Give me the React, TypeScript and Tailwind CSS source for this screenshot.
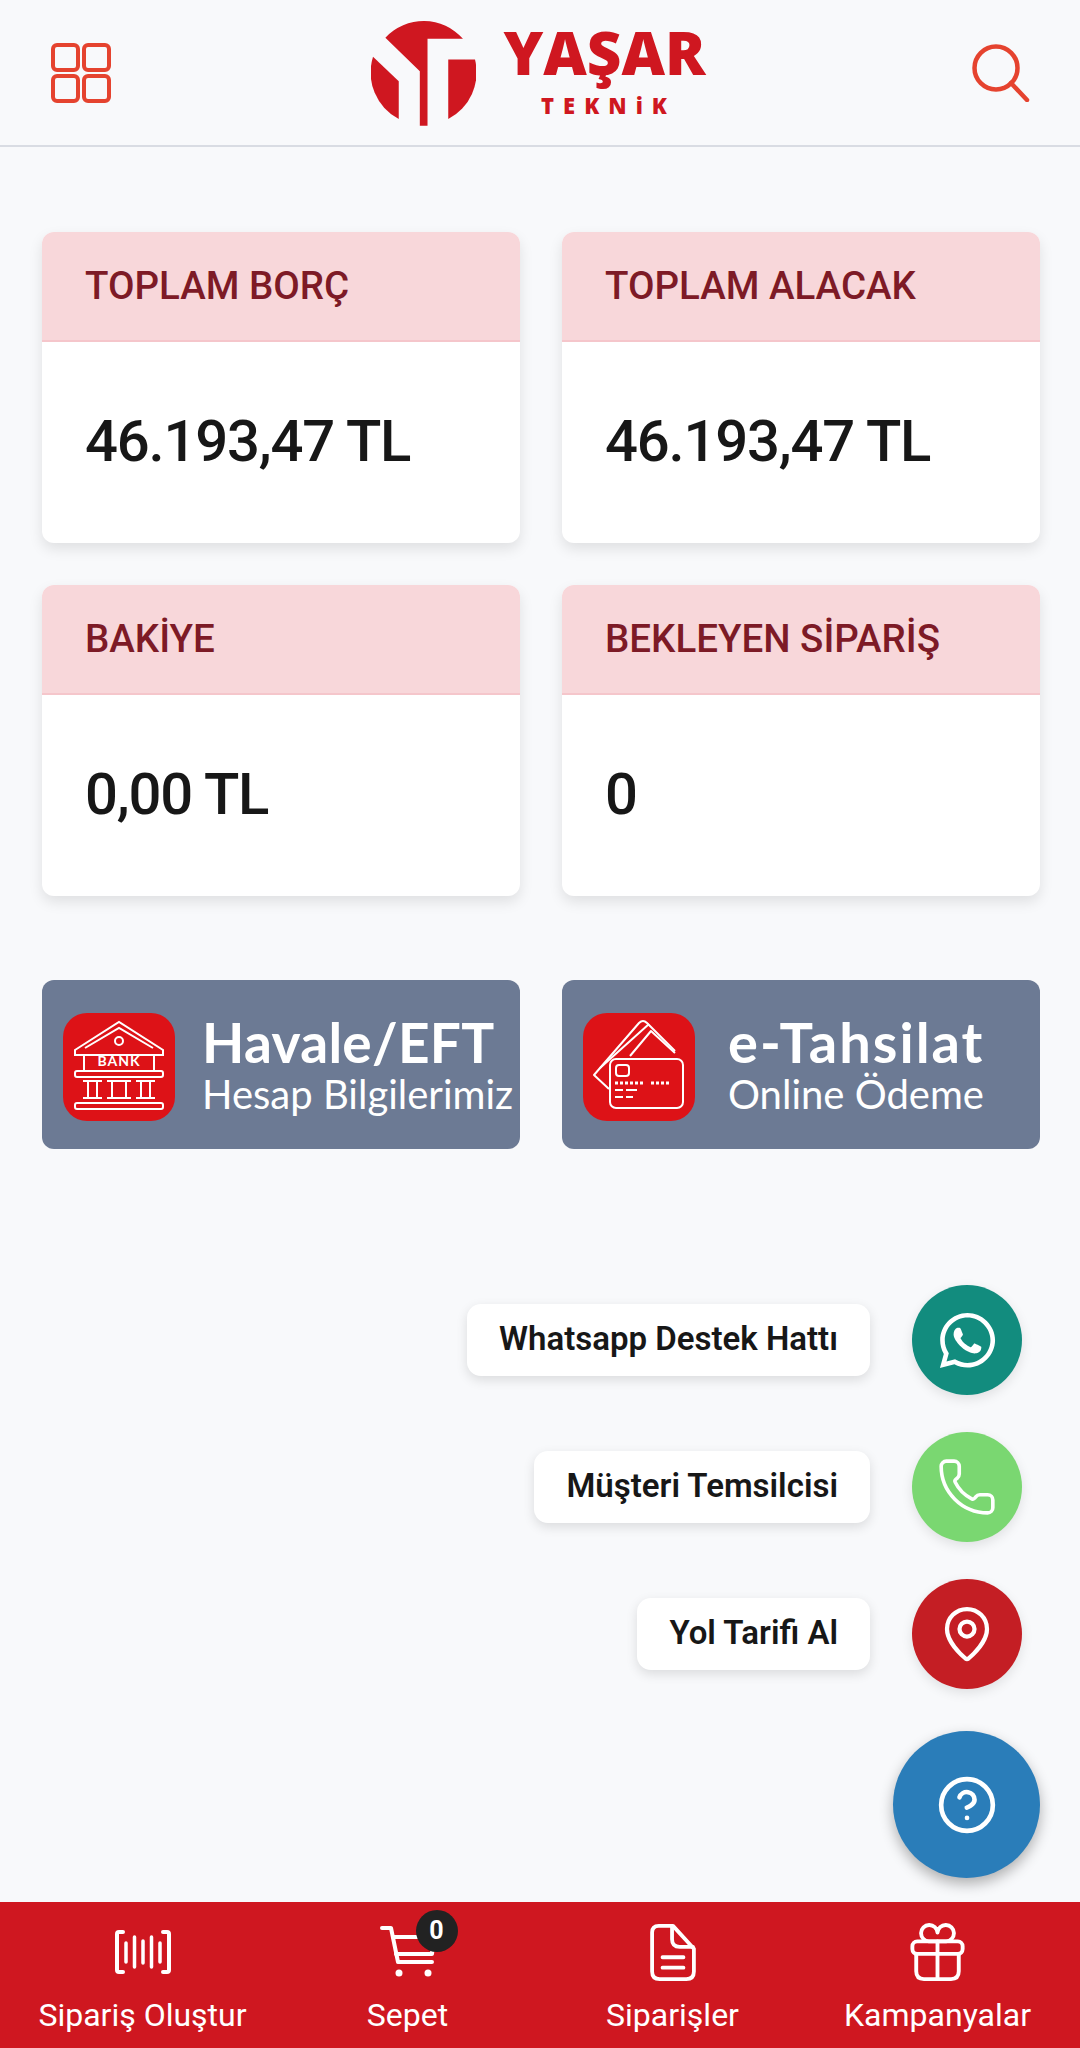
import React from 'react';
import { CircleHelp, MapPin, Phone } from 'lucide-react';
import { FaWhatsapp } from 'react-icons/fa';

const stats = [
  { title: 'TOPLAM BORÇ', value: '46.193,47 TL' },
  { title: 'TOPLAM ALACAK', value: '46.193,47 TL' },
  { title: 'BAKİYE', value: '0,00 TL' },
  { title: 'BEKLEYEN SİPARİŞ', value: '0' },
];

function LogoMark() {
  return (
    <svg width="105" height="106" viewBox="87 62 314 317" fill="#cf1720">
      <path d="M130 115 A157 157 0 0 1 362 118 H256 V378 H233 V215 Z" />
      <path d="M93 172 L170 245 V358 A157 157 0 0 1 93 172 Z" />
      <path d="M318 180 H398 A157 157 0 0 1 318 358 Z" />
    </svg>
  );
}

function BankIcon() {
  return (
    <svg width="112" height="108" viewBox="0 0 112 108" fill="none" stroke="white" strokeWidth="2">
      <path d="M12 37 L56 9 L100 37 L100 42 H12 Z" />
      <path d="M22 35 L56 15 L90 35" />
      <circle cx="56" cy="28" r="4" />
      <path d="M21 42 V58 M91 42 V58" />
      <rect x="12" y="58" width="88" height="6" rx="2" />
      <path d="M25 68 V84 M34 68 V84 M49 68 V84 M63 68 V84 M78 68 V84 M87 68 V84" />
      <path d="M20 68 H39 M44 68 H68 M73 68 H92 M20 85 H39 M44 85 H68 M73 85 H92" />
      <rect x="12" y="90" width="88" height="6" rx="2" />
      <text x="56" y="53" textAnchor="middle" fill="white" stroke="none" fontSize="14" fontWeight="700" letterSpacing="1" fontFamily="Lato, sans-serif">BANK</text>
    </svg>
  );
}

function CardIcon() {
  return (
    <svg width="112" height="108" viewBox="0 0 112 108" fill="none" stroke="white" strokeWidth="2" strokeLinejoin="round">
      <path d="M26 76 L11 62 L56 10 Q60 6 64 10 L92 38" />
      <path d="M17 55 L66 11" />
      <path d="M47 43 L68 18 L92 40" />
      <rect x="27" y="46" width="73" height="49" rx="6" fill="#dd1217" />
      <rect x="33" y="52" width="13" height="11" rx="3" />
      <path d="M32 70 H60 M68 70 H88" strokeDasharray="3 2" strokeWidth="3" />
      <path d="M32 77 H40 M43 77 H54 M32 84 H40 M43 84 H50" />
    </svg>
  );
}

function BarcodeIcon() {
  return (
    <svg width="56" height="44" viewBox="0 0 56 44" fill="none" stroke="white" strokeWidth="4" strokeLinecap="round" strokeLinejoin="round">
      <path d="M8 2 H4 Q2 2 2 4 V40 Q2 42 4 42 H8 M48 2 H52 Q54 2 54 4 V40 Q54 42 52 42 H48" />
      <path d="M11 13 V32 M19.5 7 V37 M28 11 V33 M36.5 7 V37 M45 13 V32" strokeWidth="3.5" />
    </svg>
  );
}

function CartIcon() {
  return (
    <svg width="56" height="54" viewBox="0 0 56 54" fill="none" stroke="white" strokeWidth="4" strokeLinecap="round" strokeLinejoin="round">
      <path d="M2 3 H11 L18 37 H52" />
      <path d="M13 12 H54 L52 29 H16" />
      <circle cx="19" cy="48" r="3.5" fill="white" stroke="none" />
      <circle cx="48" cy="48" r="3.5" fill="white" stroke="none" />
    </svg>
  );
}

function DocIcon() {
  return (
    <svg width="46" height="57" viewBox="0 0 48 60" fill="none" stroke="white" strokeWidth="4" strokeLinecap="round" strokeLinejoin="round">
      <path d="M9 2 H24 L46 26 V50 Q46 58 38 58 H10 Q2 58 2 50 V9 Q2 2 9 2 Z" />
      <path d="M23 3 V16 Q23 24 31 24 H45" />
      <path d="M13 35 H35 M13 46 H35" />
    </svg>
  );
}

function GiftIcon() {
  return (
    <svg width="55" height="58" viewBox="0 0 56 60" fill="none" stroke="white" strokeWidth="4" strokeLinecap="round" strokeLinejoin="round">
      <rect x="2" y="19" width="52" height="13" rx="5" />
      <path d="M6 32 V50 Q6 58 14 58 H42 Q50 58 50 50 V32" />
      <path d="M28 19 V58" />
      <path d="M28 19 H19 A8.5 8.5 0 1 1 28 10 A8.5 8.5 0 1 1 37 19 H28" />
    </svg>
  );
}

function FloatingAction({ label, color, children }: { label: string; color: string; children: React.ReactNode }) {
  return (
    <div className="flex items-center justify-end gap-[42px]">
      <div className="flex h-[72px] items-center rounded-[14px] bg-white px-8 pb-[3px] text-[33px] font-semibold text-[#171717] shadow-[0_4px_12px_rgba(0,0,0,0.12)]">
        {label}
      </div>
      <div className={`flex h-[110px] w-[110px] items-center justify-center rounded-full text-white shadow-[0_4px_12px_rgba(0,0,0,0.1)] ${color}`}>
        {children}
      </div>
    </div>
  );
}

function NavItem({ label, children }: { label: string; children: React.ReactNode }) {
  return (
    <div className="flex flex-col items-center">
      <div className="flex h-[60px] items-center">{children}</div>
      <span className="mt-[13px] text-[32px] leading-[40px] text-white">{label}</span>
    </div>
  );
}

export default function App() {
  return (
    <div className="relative flex h-[2048px] w-[1080px] flex-col overflow-hidden bg-[#f8f9fb] font-['Roboto',sans-serif]">
      <header className="flex h-[147px] items-center justify-between border-b-2 border-[#d9dce3] pl-[50px] pr-[50px]">
        <svg width="62" height="62" viewBox="0 0 62 62" fill="none" stroke="#e5432f" strokeWidth="4">
          <rect x="3" y="3" width="25" height="25" rx="4" />
          <rect x="34" y="3" width="25" height="25" rx="4" />
          <rect x="3" y="34" width="25" height="25" rx="4" />
          <rect x="34" y="34" width="25" height="25" rx="4" />
        </svg>
        <div className="flex items-center gap-[20px]">
          <LogoMark />
          <div className="flex w-[218px] flex-col items-center pb-[5px] font-['Open_Sans',sans-serif] font-extrabold text-[#cf1720]">
            <span className="text-[60px] leading-[60px]">YAŞAR</span>
            <span className="mt-[9px] pl-[8px] text-[22px] leading-[28px] tracking-[9px]">TEKNiK</span>
          </div>
        </div>
        <svg width="58" height="58" viewBox="0 0 58 58" fill="none" stroke="#e5432f" strokeWidth="4.5" strokeLinecap="round">
          <circle cx="24" cy="24" r="21.5" />
          <path d="M39 39 L55 56" />
        </svg>
      </header>

      <main className="flex-1 pl-[42px] pr-[40px] pt-[85px]">
        <div className="grid grid-cols-2 gap-[42px]">
          {stats.map((s) => (
            <div key={s.title} className="h-[311px] overflow-hidden rounded-[12px] bg-white shadow-[0_6px_14px_rgba(0,0,0,0.1)]">
              <div className="flex h-[110px] items-center border-b-2 border-[#f5c6cb] bg-[#f8d7da] pl-[43px] text-[38.5px] font-medium text-[#7d1a26]">
                {s.title}
              </div>
              <div className="flex h-[201px] items-center pb-[2px] pl-[43px] text-[58px] font-medium tracking-[-1.2px] text-[#171717]">
                {s.value}
              </div>
            </div>
          ))}
        </div>

        <div className="mt-[84px] grid grid-cols-2 gap-[42px] font-['Lato',sans-serif] text-white">
          <div className="flex h-[169px] items-center rounded-[12px] bg-[#6c7a94] pl-[21px]">
            <div className="mt-[5px] h-[108px] w-[112px] rounded-[24px] bg-[#dd1217]">
              <BankIcon />
            </div>
            <div className="ml-[27px] flex flex-col">
              <span className="text-[55px] font-bold leading-[58px] tracking-[0.3px]">Havale/EFT</span>
              <span className="text-[40px] font-normal leading-[46px]">Hesap Bilgilerimiz</span>
            </div>
          </div>
          <div className="flex h-[169px] items-center rounded-[12px] bg-[#6c7a94] pl-[21px]">
            <div className="mt-[5px] h-[108px] w-[112px] rounded-[24px] bg-[#dd1217]">
              <CardIcon />
            </div>
            <div className="ml-[33px] flex flex-col">
              <span className="text-[56px] font-bold leading-[58px] tracking-[2px]">e-Tahsilat</span>
              <span className="text-[40px] font-normal leading-[46px]">Online Ödeme</span>
            </div>
          </div>
        </div>
      </main>

      {/* floating contact buttons */}
      <div className="absolute right-[40px] top-[1285px] flex flex-col items-end">
        <div className="mr-[18px] flex flex-col gap-[37px]">
          <FloatingAction label="Whatsapp Destek Hattı" color="bg-[#128c7e]">
            <FaWhatsapp size={63} />
          </FloatingAction>
          <FloatingAction label="Müşteri Temsilcisi" color="bg-[#7ad771]">
            <Phone size={62} strokeWidth={1.4} />
          </FloatingAction>
          <FloatingAction label="Yol Tarifi Al" color="bg-[#c41e24]">
            <MapPin size={60} strokeWidth={1.7} />
          </FloatingAction>
        </div>
        <div className="mt-[42px] flex h-[147px] w-[147px] items-center justify-center rounded-full bg-[#2a7db9] text-white shadow-[0_6px_14px_rgba(0,0,0,0.3)]">
          <CircleHelp size={62} strokeWidth={1.8} />
        </div>
      </div>

      <nav className="grid h-[146px] grid-cols-4 bg-[#cf1720] px-[10px] pt-[20px]">
        <NavItem label="Sipariş Oluştur">
          <BarcodeIcon />
        </NavItem>
        <NavItem label="Sepet">
          <div className="relative">
            <CartIcon />
            <span className="absolute -right-[22px] -top-[15px] flex h-[42px] w-[42px] items-center justify-center rounded-full bg-[#222222] text-[25px] font-bold text-white">
              0
            </span>
          </div>
        </NavItem>
        <NavItem label="Siparişler">
          <DocIcon />
        </NavItem>
        <NavItem label="Kampanyalar">
          <GiftIcon />
        </NavItem>
      </nav>
    </div>
  );
}
